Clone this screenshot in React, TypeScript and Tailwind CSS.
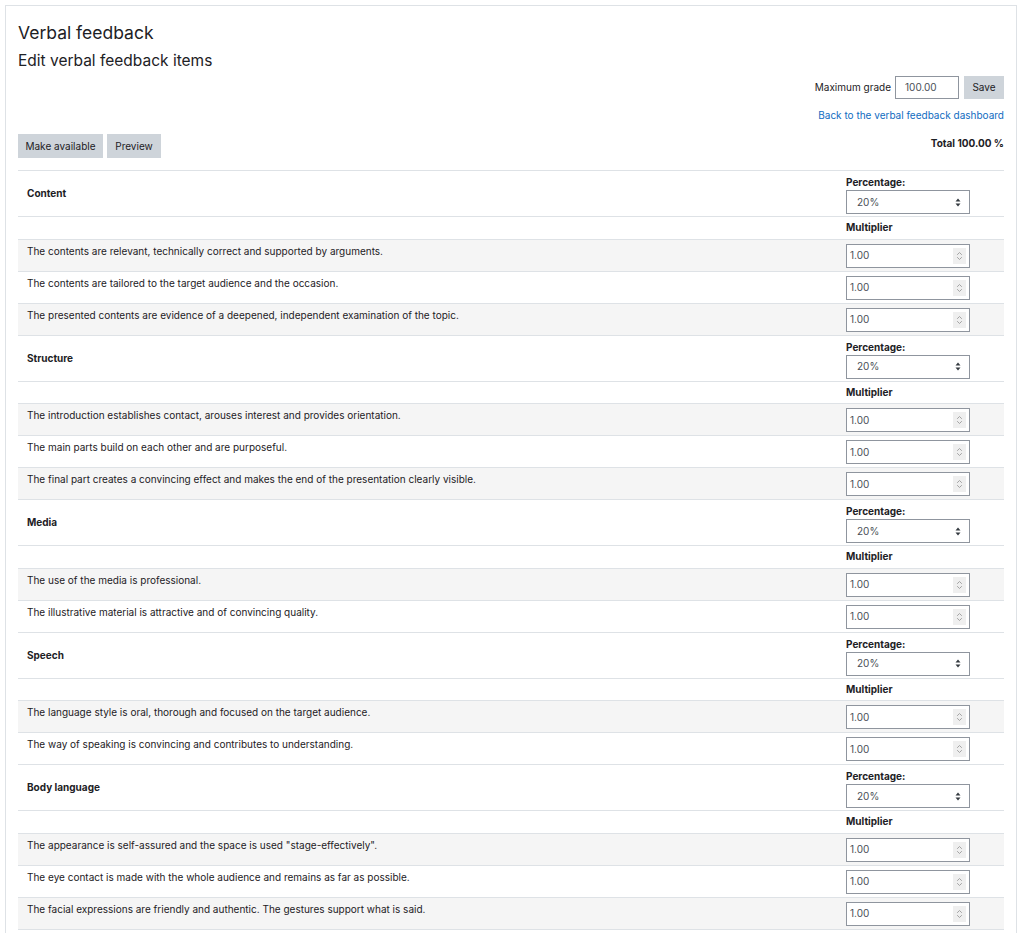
import React from "react";

const categories = [
  {
    name: "Content",
    items: [
      "The contents are relevant, technically correct and supported by arguments.",
      "The contents are tailored to the target audience and the occasion.",
      "The presented contents are evidence of a deepened, independent examination of the topic.",
    ],
  },
  {
    name: "Structure",
    items: [
      "The introduction establishes contact, arouses interest and provides orientation.",
      "The main parts build on each other and are purposeful.",
      "The final part creates a convincing effect and makes the end of the presentation clearly visible.",
    ],
  },
  {
    name: "Media",
    items: [
      "The use of the media is professional.",
      "The illustrative material is attractive and of convincing quality.",
    ],
  },
  {
    name: "Speech",
    items: [
      "The language style is oral, thorough and focused on the target audience.",
      "The way of speaking is convincing and contributes to understanding.",
    ],
  },
  {
    name: "Body language",
    items: [
      'The appearance is self-assured and the space is used "stage-effectively".',
      "The eye contact is made with the whole audience and remains as far as possible.",
      "The facial expressions are friendly and authentic. The gestures support what is said.",
    ],
  },
];

const SelectBox = () => (
  <div className="flex h-[24px] w-[124px] items-center justify-between border border-[#8f959e] bg-white pl-[10px] pr-[8px] text-[10px] text-[#495057]">
    <span>20%</span>
    <svg width="6" height="9" viewBox="0 0 6 9">
      <path d="M3 0.5 L5.5 3.5 H0.5 Z" fill="#343a40" />
      <path d="M3 8.5 L5.5 5.5 H0.5 Z" fill="#343a40" />
    </svg>
  </div>
);

const NumberBox = () => (
  <div className="flex h-[24px] w-[124px] items-center justify-between border border-[#8f959e] bg-white pl-[3px] pr-[3px] text-[10px] text-[#495057]">
    <span>1.00</span>
    <div className="flex h-[16px] w-[13px] items-center justify-center bg-[#efefef]">
      <svg width="7" height="10" viewBox="0 0 7 10" fill="none" stroke="#9a9a9a" strokeWidth="0.9">
        <path d="M1.2 3.8 L3.5 1.5 L5.8 3.8" />
        <path d="M1.2 6.2 L3.5 8.5 L5.8 6.2" />
      </svg>
    </div>
  </div>
);

const Category = ({ cat }: { cat: (typeof categories)[0] }) => (
  <>
    <div className="flex h-[46px] border-t border-[#dee2e6]">
      <div className="flex flex-1 items-center px-[9px] font-bold">{cat.name}</div>
      <div className="flex w-[165px] flex-col pl-[7px] pt-[4px]">
        <div className="h-[15px] font-bold leading-[15px]">Percentage:</div>
        <SelectBox />
      </div>
    </div>
    <div className="flex h-[22.5px] border-t border-[#dee2e6]">
      <div className="flex-1" />
      <div className="flex w-[165px] items-center pl-[7px] font-bold">Multiplier</div>
    </div>
    {cat.items.map((item, i) => (
      <div
        key={item}
        className={`flex h-[32px] border-t border-[#dee2e6] ${i % 2 === 0 ? "bg-[#f5f5f5]" : "bg-white"}`}
      >
        <div className="flex-1 px-[9px] pt-[4px] leading-[15px]">{item}</div>
        <div className="w-[165px] pl-[7px] pt-[4px]">
          <NumberBox />
        </div>
      </div>
    ))}
  </>
);

export default function App() {
  return (
    <div
      className="min-h-screen bg-white pl-[5px] pr-[6px] pt-[5px] text-[10px] text-[#1d2125]"
      style={{ fontFamily: "Inter, 'Liberation Sans', sans-serif" }}
    >
      <div className="border border-[#dee2e6] px-[12px] pb-[30px] pt-[14px]">
        <h2 className="text-[17.5px] font-normal leading-[26px]">Verbal feedback</h2>
        <h3 className="mt-[3px] text-[15.5px] font-normal leading-[24px]">Edit verbal feedback items</h3>

        <div className="mt-[3px] flex items-center justify-end gap-[3px]">
          <span className="mr-[1px]">Maximum grade</span>
          <div className="flex h-[23px] w-[64px] items-center border border-[#8f959e] pl-[9px] text-[#495057]">
            100.00
          </div>
          <button className="ml-[2px] h-[23px] w-[40px] bg-[#ced4da] text-[#1d2125]">Save</button>
        </div>
        <div className="mt-[9px] flex justify-end">
          <a className="text-[#0f6cbf]">Back to the verbal feedback dashboard</a>
        </div>

        <div className="mt-[11px] flex items-start justify-between">
          <div className="flex gap-[4px]">
            <button className="h-[24px] w-[85px] bg-[#ced4da]">Make available</button>
            <button className="h-[24px] w-[54px] bg-[#ced4da]">Preview</button>
          </div>
          <div className="pt-[2px] font-bold">Total 100.00 %</div>
        </div>

        <div className="mt-[12px] border-b border-[#dee2e6]">
          {categories.map((c) => (
            <Category key={c.name} cat={c} />
          ))}
        </div>
      </div>
    </div>
  );
}
